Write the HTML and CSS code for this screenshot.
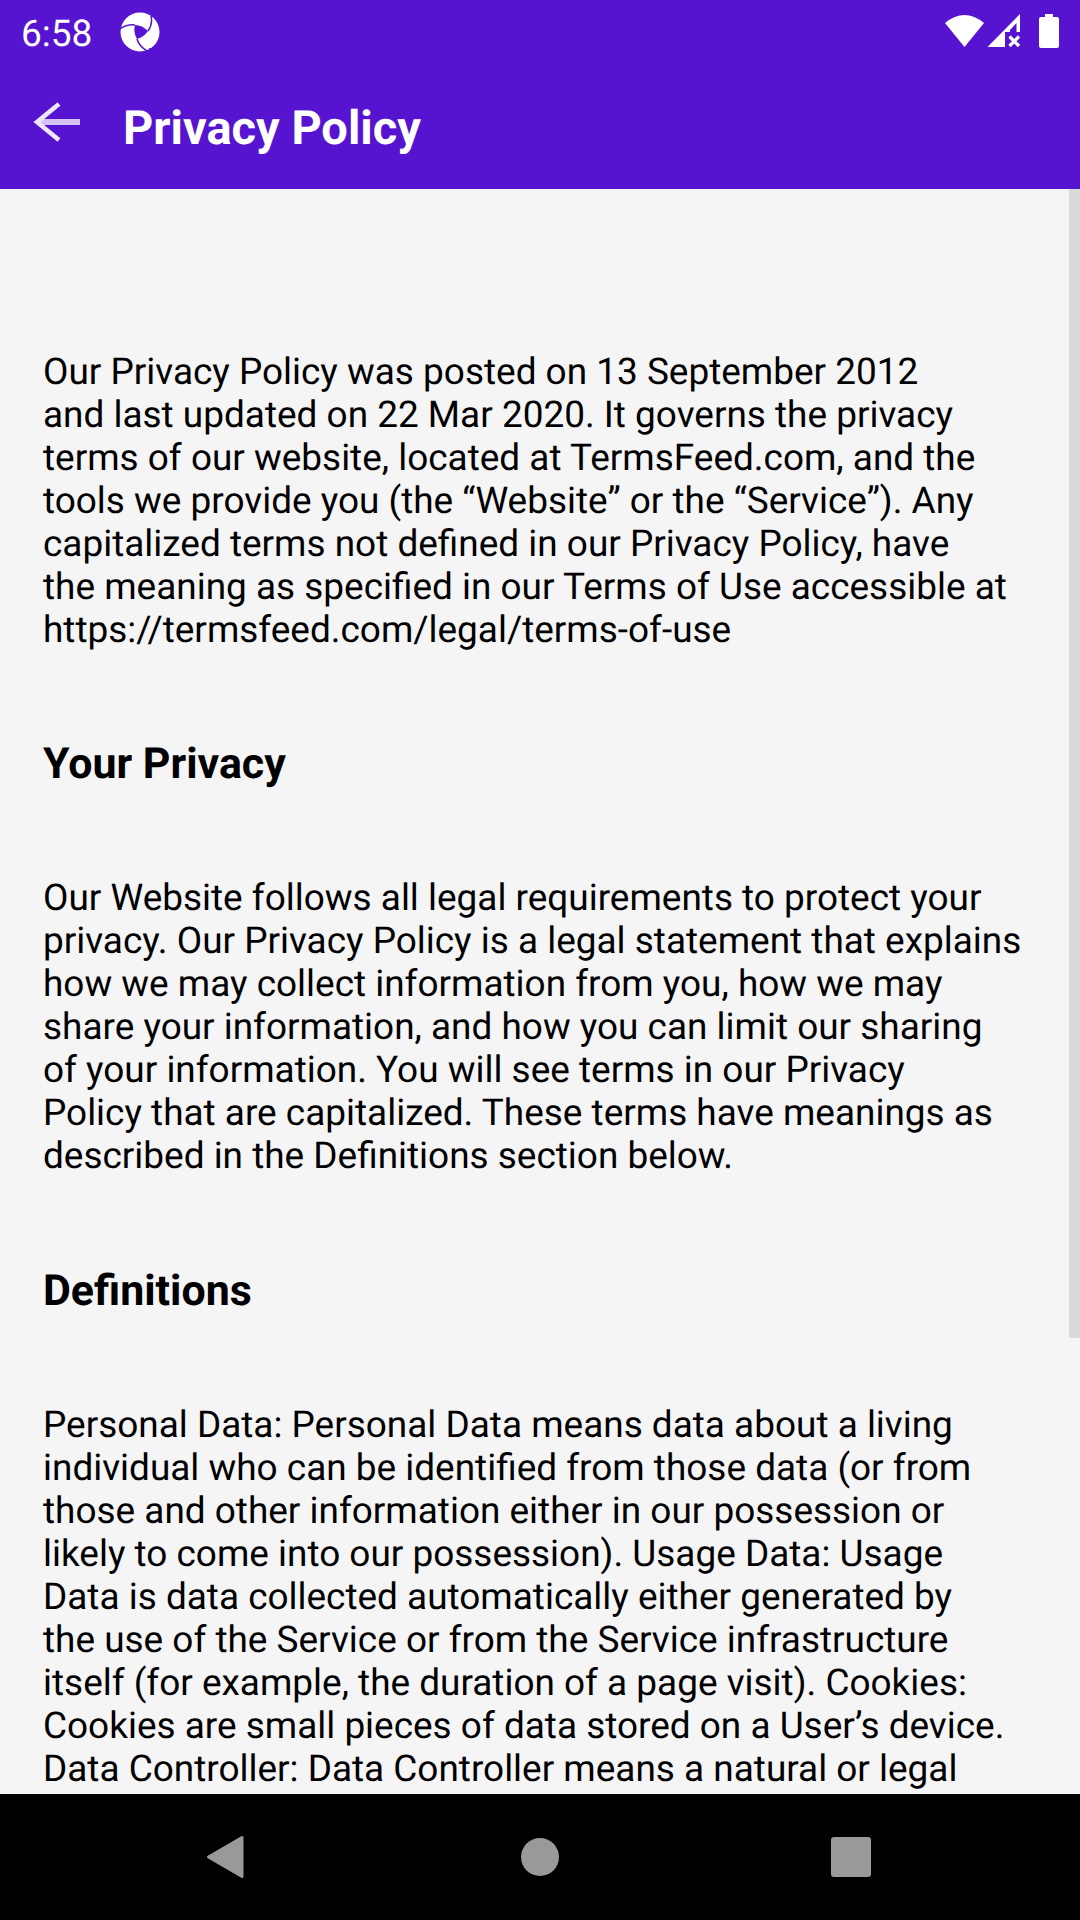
FILE: index.html
```html
<!DOCTYPE html>
<html lang="en">
<head>
<meta charset="utf-8">
<title>Privacy Policy</title>
<link rel="stylesheet" href="styles.css">
</head>
<body>
<div class="screen">
  <header class="top">
    <div class="status">
      <span class="clock">6:58</span>
      <svg class="app-icon" viewBox="0 0 40 40"><circle cx="20" cy="20" r="19.500" fill="#fff"/><path d="M15 13Q22 13 28 19Q24 25 17 27Q13 20 15 13Z" fill="#5614d0"/><path d="M0 17Q7 12 15 13M31 4Q33 12 28 19M17 27Q19 34 27 39M29 37Q36 37 38 32" fill="none" stroke="#5614d0" stroke-width="1.500"/></svg>
      <svg class="signals" viewBox="0 0 120 40"><path d="M0 9Q19.500-7 39 9L19.500 33Z" fill="#fff"/><path d="M42.500 33L75 0V18H71.500V9L65 16V18H60V33Z" fill="#fff"/><path d="M64.500 22.500l9.500 9.500m0-9.500l-9.500 9.500" stroke="#fff" stroke-width="3.200"/><path d="M100 0h8v3h4q2 0 2 2v27q0 2-2 2H96q-2 0-2-2V5q0-2 2-2h4Z" fill="#fff"/></svg>
    </div>
    <div class="bar">
      <svg class="back" viewBox="0 0 48 44"><path d="M5 22H47" stroke="#d5c4f3" stroke-width="6"/><path d="M26 4L4 22l22 18" fill="none" stroke="#eee7fb" stroke-width="4.500"/></svg>
      <h1 class="title">Privacy Policy</h1>
    </div>
  </header>
  <main class="content">
    <p class="text">Our Privacy Policy was posted on 13 September 2012<br>and last updated on 22 Mar 2020. It governs the privacy<br>terms of our website, located at TermsFeed.com, and the<br>tools we provide you (the “Website” or the “Service”). Any<br>capitalized terms not defined in our Privacy Policy, have<br>the meaning as specified in our Terms of Use accessible at<br>https://termsfeed.com/legal/terms-of-use</p>
    <h2 class="heading">Your Privacy</h2>
    <p class="text">Our Website follows all legal requirements to protect your<br>privacy. Our Privacy Policy is a legal statement that explains<br>how we may collect information from you, how we may<br>share your information, and how you can limit our sharing<br>of your information. You will see terms in our Privacy<br>Policy that are capitalized. These terms have meanings as<br>described in the Definitions section below.</p>
    <h2 class="heading">Definitions</h2>
    <p class="text">Personal Data: Personal Data means data about a living<br>individual who can be identified from those data (or from<br>those and other information either in our possession or<br>likely to come into our possession). Usage Data: Usage<br>Data is data collected automatically either generated by<br>the use of the Service or from the Service infrastructure<br>itself (for example, the duration of a page visit). Cookies:<br>Cookies are small pieces of data stored on a User’s device.<br>Data Controller: Data Controller means a natural or legal</p>
    <div class="scrollbar"></div>
  </main>
  <nav class="nav">
    <svg class="nav-icons" viewBox="0 0 1080 126"><path d="M208.500 63L242 43.500V82.500Z" fill="#999" stroke="#999" stroke-width="3" stroke-linejoin="round"/><circle cx="540" cy="63" r="19" fill="#999"/><rect x="831" y="43" width="40" height="40" rx="3" fill="#999"/></svg>
  </nav>
</div>
</body>
</html>
```
FILE: styles.css
```css
body { margin: 0; font-family: Roboto, sans-serif; text-rendering: geometricPrecision; }
.screen { display: flex; flex-direction: column; width: 1080px; height: 1920px; overflow: hidden; }
.top { height: 189px; background: #5614d0; color: #fff; }
.status { display: flex; align-items: center; height: 63px; }
.clock { width: 99px; margin-left: 21px; padding-top: 5px; font-size: 37px; }
.app-icon { width: 40px; height: 40px; }
.signals { width: 120px; height: 40px; margin-left: 785px; padding-top: 4px; }
.bar { display: flex; align-items: center; height: 126px; }
.back { width: 48px; height: 44px; margin: 0 0 8px 33px; }
.title { margin: 5px 0 0 42px; font-size: 47px; font-weight: 700; line-height: 1; }
.content { position: relative; flex: 1; min-height: 0; box-sizing: border-box; padding: 162px 0 0 43px; background: #f5f5f5; color: #000; overflow: hidden; }
.text { margin: 0; font-size: 36.95px; line-height: 43px; white-space: nowrap; }
.heading { margin: 85.2px 0; font-size: 42.9px; line-height: 55px; font-weight: 700; }
.scrollbar { position: absolute; top: 0; right: 0; width: 11px; height: 1149px; background: #dadada; }
.nav { height: 126px; background: #000; }
.nav-icons { display: block; width: 1080px; height: 126px; }
```
